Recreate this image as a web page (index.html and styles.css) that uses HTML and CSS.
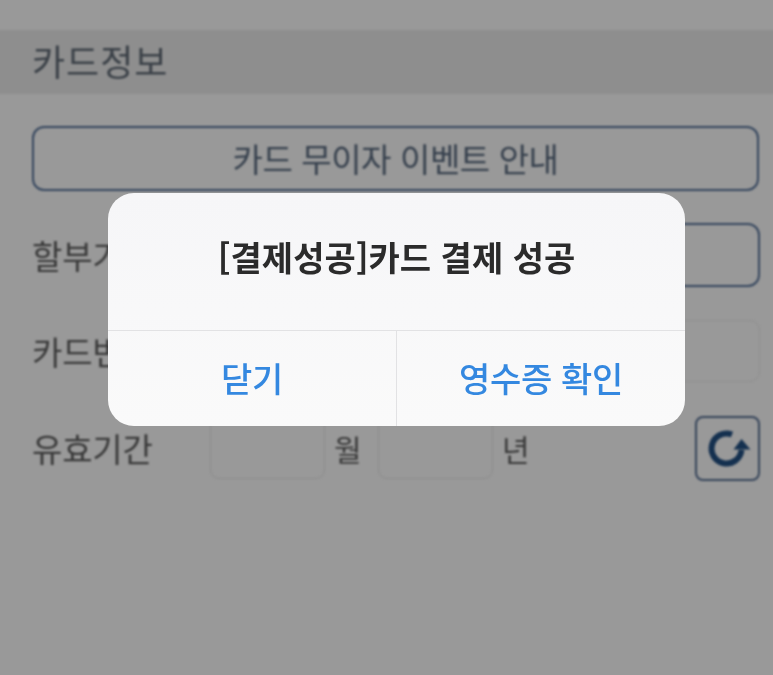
FILE: index.html
```html
<!DOCTYPE html>
<html lang="ko">
<head>
<meta charset="utf-8">
<title>카드정보</title>
<link rel="stylesheet" href="styles.css">
</head>
<body>
<div class="page">
  <h2 class="section">카드정보</h2>
  <div class="form">
    <div class="event-btn">카드 무이자 이벤트 안내</div>
    <div class="row">
      <span class="label">할부기간</span>
      <div class="select"></div>
    </div>
    <div class="row">
      <span class="label">카드번호</span>
      <div class="input-num"></div>
    </div>
    <div class="row date">
      <span class="label">유효기간</span>
      <div class="input-date"></div>
      <span class="unit">월</span>
      <div class="input-date"></div>
      <span class="unit">년</span>
      <div class="refresh">
        <svg viewBox="0 0 48 48" width="48" height="48">
          <path class="arc" d="M28 10.5 A15 15 0 1 0 37.5 26"/>
          <path class="head" d="M37.5 15 L46.5 25.5 L29.5 25.5 Z"/>
        </svg>
      </div>
    </div>
  </div>
</div>
<div class="dialog">
  <div class="dialog-msg">[결제성공]카드 결제 성공</div>
  <div class="dialog-actions">
    <div class="action">닫기</div>
    <div class="action">영수증 확인</div>
  </div>
</div>
</body>
</html>
```
FILE: styles.css
```css
* { box-sizing: border-box; }
html, body { margin: 0; height: 100%; }
body {
  width: 773px;
  height: 675px;
  overflow: hidden;
  background: #999999;
  font-family: "Noto Sans CJK KR", "Noto Sans", sans-serif;
  position: relative;
}
.page {
  margin: 0 -6px;
  padding-top: 30px;
  filter: blur(0.8px);
}
.section {
  margin: 0;
  height: 64px;
  padding-left: 38px;
  background: #8e8e8e;
  color: #3a4047;
  font-size: 36px;
  font-weight: 400;
  line-height: 60px;
  letter-spacing: 1px;
}
.form {
  padding: 32px 19px 0 38px;
  display: flex;
  flex-direction: column;
}
.event-btn {
  width: 727px;
  height: 65px;
  border: 2px solid #35465e;
  border-radius: 12px;
  text-align: center;
  color: #36404d;
  font-size: 33px;
  line-height: 60px;
  letter-spacing: -0.4px;
}
.row {
  display: flex;
  align-items: center;
  height: 64px;
  margin-top: 32px;
  position: relative;
}
.label {
  color: #383838;
  font-size: 33px;
  width: 178px;
  flex: none;
  letter-spacing: -0.2px;
}
.select {
  margin-left: auto;
  width: 500px;
  height: 64px;
  border: 2px solid #35465e;
  border-radius: 12px;
}
.input-num {
  margin-left: auto;
  width: 500px;
  height: 62px;
  border: 1px solid #8f8f8f;
  border-radius: 10px;
}
.date { margin-top: 33px; }
.input-date {
  width: 115px;
  height: 62px;
  border: 1px solid #8c8c8c;
  border-radius: 9px;
  flex: none;
}
.unit {
  color: #383838;
  font-size: 30px;
  width: 53px;
  padding-left: 9px;
  flex: none;
}
.unit:last-of-type { width: auto; }
.refresh {
  margin-left: auto;
  width: 65px;
  height: 65px;
  border: 2px solid #35445a;
  border-radius: 8px;
  display: flex;
  align-items: center;
  justify-content: center;
}
.arc { fill: none; stroke: #14304f; stroke-width: 6; }
.head { fill: #14304f; }
.dialog {
  position: absolute;
  left: 108px;
  top: 193px;
  width: 577px;
  height: 233px;
  background: linear-gradient(#f6f6f8, #fafafa);
  border-radius: 26px;
  display: flex;
  flex-direction: column;
  filter: blur(0.6px);
}
.dialog-msg {
  height: 138px;
  padding-bottom: 10px;
  display: flex;
  align-items: center;
  justify-content: center;
  color: #2b2b2b;
  font-size: 34px;
  font-weight: 700;
  letter-spacing: 0;
  border-bottom: 1px solid #e2e2e4;
}
.dialog-actions { flex: 1; display: flex; }
.action {
  display: flex;
  align-items: center;
  justify-content: center;
  padding-bottom: 2px;
  color: #3488e0;
  font-size: 34px;
  font-weight: 500;
  letter-spacing: -0.3px;
}
.action:first-child { width: 289px; border-right: 1px solid #e2e2e4; }
.action:last-child { flex: 1; }
```
